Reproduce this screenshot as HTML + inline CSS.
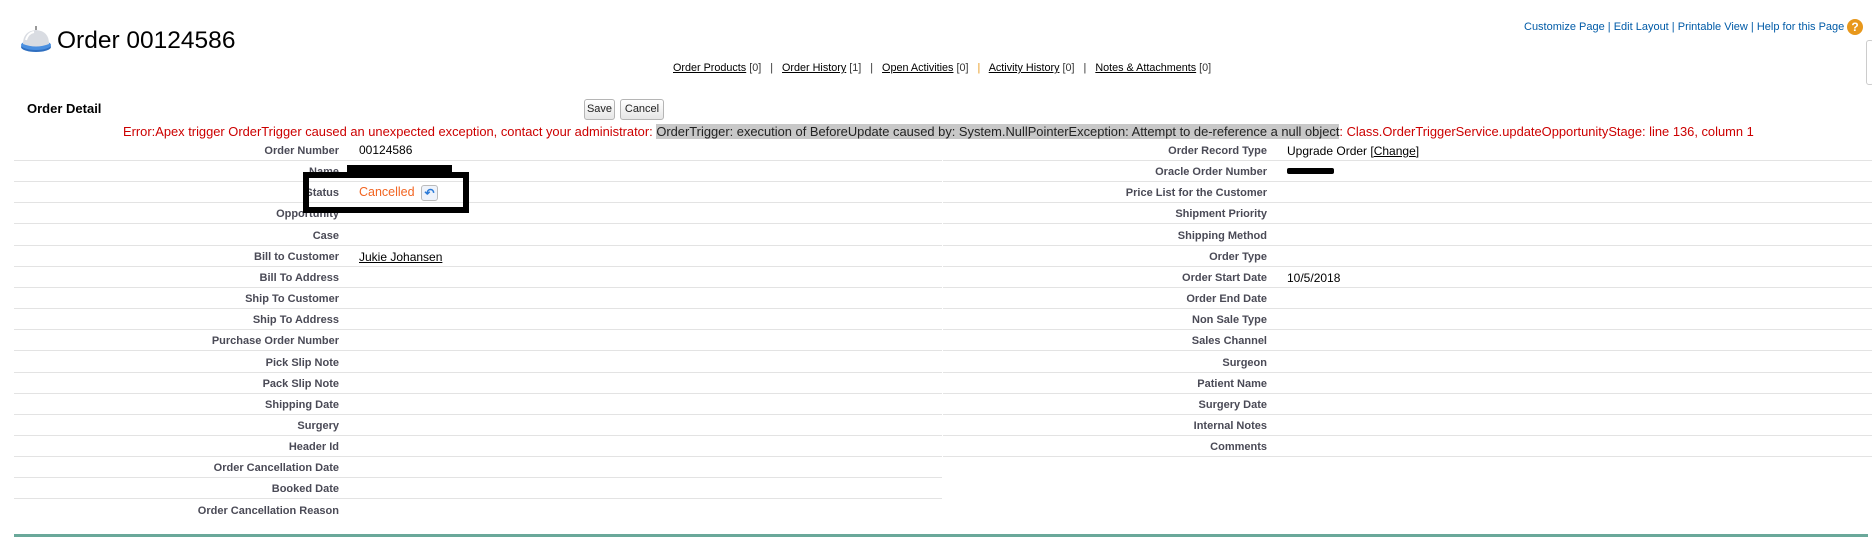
<!DOCTYPE html>
<html><head><meta charset="utf-8"><style>
*{margin:0;padding:0;box-sizing:border-box}
body{width:1872px;height:538px;background:#fff;font-family:"Liberation Sans",Arial,sans-serif;position:relative;overflow:hidden;color:#000}
.a{position:absolute;white-space:nowrap}
.lbl{position:absolute;font-weight:bold;font-size:11px;color:#4a4a56;text-align:right;white-space:nowrap}
.val{position:absolute;font-size:12px;color:#000;white-space:nowrap}
.ln{position:absolute;height:1px;background:#e3e3e3}
.tl a{color:#015ba7;text-decoration:none}
.rl{font-size:10.8px;color:#333}
.rl u{color:#000}
.btn{position:absolute;border:1px solid #b5b5b5;border-radius:3px;background:linear-gradient(#fff,#e6e6e6);font-size:11px;color:#222;text-align:center;line-height:19px;height:21px}
</style></head><body>
<svg class="a" style="left:20px;top:25px" width="32" height="28" viewBox="0 0 32 28">
<ellipse cx="16" cy="22" rx="15" ry="5" fill="#2f6fc0"/>
<ellipse cx="16" cy="20" rx="15" ry="5" fill="#4a8fe0"/>
<path d="M3 19 Q3 6 16 5 Q29 6 29 19 Q16 24 3 19Z" fill="#d9dce2"/>
<path d="M6 15 Q8 8 14 7" stroke="#fff" stroke-width="2" fill="none"/>
<rect x="15" y="1" width="2" height="4" fill="#999"/>
</svg>
<div class="a" style="left:57px;top:27px;font-size:24.5px;color:#000">Order 00124586</div>
<div class="a tl" style="left:1524px;top:21px;font-size:11px;color:#015ba7"><a>Customize Page</a> | <a>Edit Layout</a> | <a>Printable View</a> | <a>Help for this Page</a></div>
<div class="a" style="left:1847px;top:19px;width:16px;height:16px;border-radius:50%;background:#e8981c;color:#fff;font-size:12px;font-weight:bold;text-align:center;line-height:16px">?</div>
<div class="a" style="left:1866px;top:40px;width:8px;height:45px;border:1px solid #ccc;border-radius:3px"></div>
<div class="a rl" style="left:673px;top:62px"><u>Order Products</u> [0] &nbsp; | &nbsp; <u>Order History</u> [1] &nbsp; | &nbsp; <u>Open Activities</u> [0] &nbsp; <span style="color:#e8981c">|</span> &nbsp; <u>Activity History</u> [0] &nbsp; | &nbsp; <u>Notes &amp; Attachments</u> [0]</div>
<div class="a" style="left:27px;top:101px;font-size:13px;font-weight:bold">Order Detail</div>
<div class="btn" style="left:584px;top:99px;width:31px">Save</div>
<div class="btn" style="left:620px;top:99px;width:44px">Cancel</div>
<div class="a" style="left:123px;top:124px;font-size:12.9px;color:#c00">Error:Apex trigger OrderTrigger caused an unexpected exception, contact your administrator: <span style="background:#c8c8c8;color:#222">OrderTrigger: execution of BeforeUpdate caused by: System.NullPointerException: Attempt to de-reference a null object</span>: Class.OrderTriggerService.updateOpportunityStage: line 136, column 1</div>
<div id="rows"></div>
<div class="a" style="left:14px;top:534px;width:1854px;height:3px;background:#6aa89a"></div>
<script>
var L=["Order Number","Name","Status","Opportunity","Case","Bill to Customer","Bill To Address","Ship To Customer","Ship To Address","Purchase Order Number","Pick Slip Note","Pack Slip Note","Shipping Date","Surgery","Header Id","Order Cancellation Date","Booked Date","Order Cancellation Reason"];
var R=["Order Record Type","Oracle Order Number","Price List for the Customer","Shipment Priority","Shipping Method","Order Type","Order Start Date","Order End Date","Non Sale Type","Sales Channel","Surgeon","Patient Name","Surgery Date","Internal Notes","Comments"];
var h="";var p=21.15;
for(var i=0;i<L.length;i++){var c=150+i*p;
h+='<div class="lbl" style="right:'+(1872-339)+'px;top:'+(c-5)+'px">'+L[i]+'</div>';
if(i<L.length-1)h+='<div class="ln" style="left:14px;width:928px;top:'+Math.round(c+10)+'px"></div>';}
for(var i=0;i<R.length;i++){var c=150+i*p;
h+='<div class="lbl" style="right:'+(1872-1267)+'px;top:'+(c-5)+'px">'+R[i]+'</div>';
h+='<div class="ln" style="left:943px;width:929px;top:'+Math.round(c+10)+'px"></div>';}
document.getElementById("rows").innerHTML=h;
</script>
<div class="val" style="left:359px;top:143px">00124586</div>
<div class="a" style="left:347px;top:165px;width:105px;height:9px;background:#000"></div>
<div class="a" style="left:303px;top:172px;width:166px;height:41px;border:6px solid #000"></div>
<div class="val" style="left:359px;top:185px;color:#f26522;font-size:12.5px">Cancelled</div>
<div class="a" style="left:421px;top:185px;width:17px;height:16px;border:1px solid #bbb;border-radius:3px;background:#eef3fb;color:#2a7ad8;font-size:12px;font-weight:bold;text-align:center;line-height:14px">&#x21B6;</div>
<div class="val" style="left:359px;top:250px"><u>Jukie Johansen</u></div>
<div class="val" style="left:1287px;top:144px">Upgrade Order [<u>Change</u>]</div>
<div class="a" style="left:1287px;top:168px;width:47px;height:6px;background:#000;border-radius:2px"></div>
<div class="val" style="left:1287px;top:271px">10/5/2018</div>
</body></html>
